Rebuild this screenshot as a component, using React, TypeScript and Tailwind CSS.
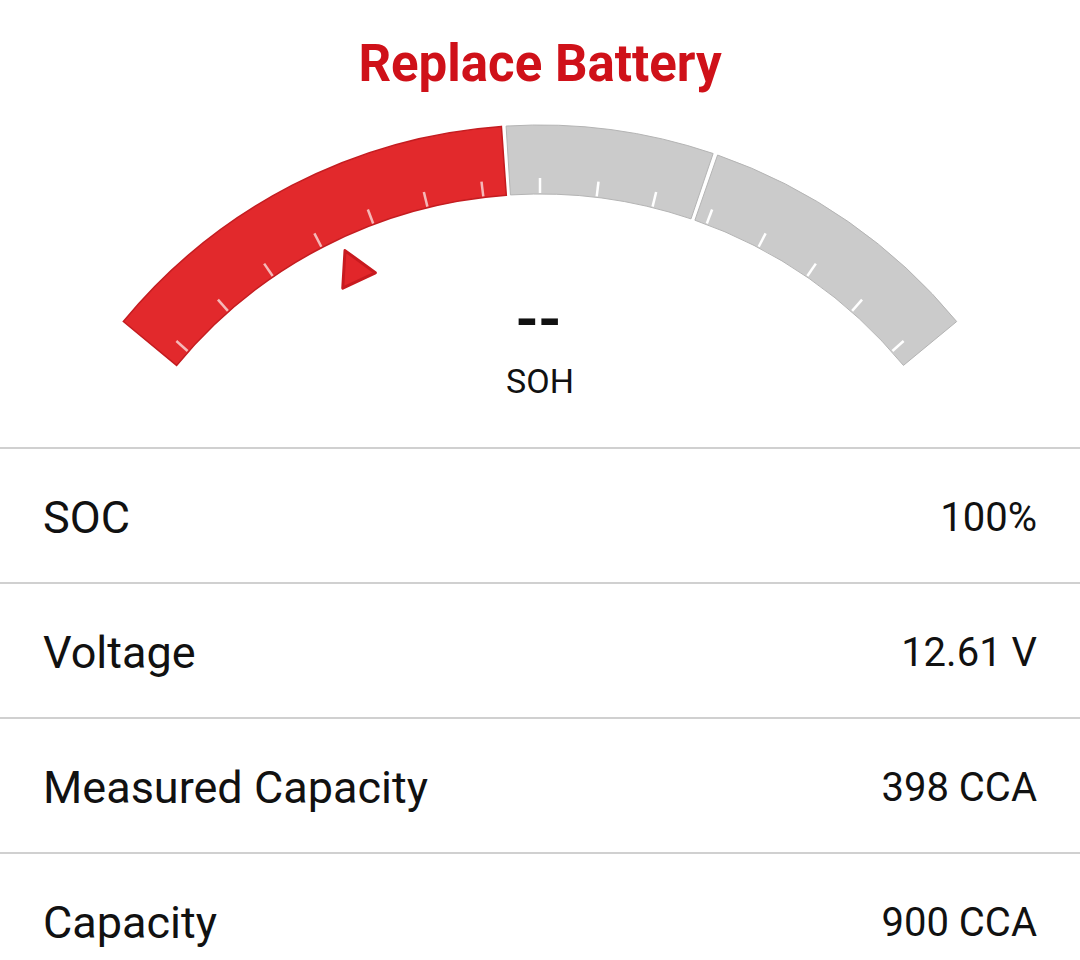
import React from "react";

const CX = 540;
const CY = 665;
const RO = 540;
const RI = 471;

function pt(r: number, deg: number): [number, number] {
  const a = (deg * Math.PI) / 180;
  return [CX + r * Math.cos(a), CY - r * Math.sin(a)];
}

function f(p: [number, number]) {
  return `${p[0].toFixed(2)} ${p[1].toFixed(2)}`;
}

function seg(a0: number, a1: number) {
  const p0 = pt(RO, a0);
  const p1 = pt(RO, a1);
  const p2 = pt(RI, a1);
  const p3 = pt(RI, a0);
  return `M ${f(p0)} A ${RO} ${RO} 0 0 1 ${f(p1)} L ${f(p2)} A ${RI} ${RI} 0 0 0 ${f(p3)} Z`;
}

const ticks: number[] = [];
for (let k = -7; k <= 7; k++) ticks.push(90 + 6.9 * k);

function Pointer() {
  const ang = 115.2;
  const tip = pt(458, ang);
  const base = pt(425, ang);
  const a = (ang * Math.PI) / 180;
  const px = Math.sin(a);
  const py = Math.cos(a);
  const hw = 18;
  const b1: [number, number] = [base[0] + px * hw, base[1] + py * hw];
  const b2: [number, number] = [base[0] - px * hw, base[1] - py * hw];
  return (
    <path
      d={`M ${f(tip)} L ${f(b1)} L ${f(b2)} Z`}
      fill="#e2262a"
      stroke="#c81a1f"
      strokeWidth={3}
      strokeLinejoin="round"
    />
  );
}

function Gauge() {
  return (
    <svg width={1080} height={358} viewBox="0 89 1080 358" className="block">
      <path d={seg(140.5, 94.1)} fill="#e2292c" stroke="#c41c20" strokeWidth={1.5} />
      <path d={seg(93.6, 71.3)} fill="#cbcbcb" stroke="#b4b4b4" strokeWidth={1} />
      <path d={seg(70.8, 39.5)} fill="#cbcbcb" stroke="#b4b4b4" strokeWidth={1} />
      {ticks.map((t, i) => {
        const p1 = pt(RI + 1, t);
        const p2 = pt(RI + 16, t);
        const red = t > 94;
        return (
          <line
            key={i}
            x1={p1[0]}
            y1={p1[1]}
            x2={p2[0]}
            y2={p2[1]}
            stroke={red ? "#f5b8b8" : "#ffffff"}
            strokeWidth={2.5}
          />
        );
      })}
      <Pointer />
    </svg>
  );
}

const rows = [
  { label: "SOC", value: "100%" },
  { label: "Voltage", value: "12.61 V" },
  { label: "Measured Capacity", value: "398 CCA" },
  { label: "Capacity", value: "900 CCA" },
];

export default function App() {
  return (
    <div className="w-[1080px] h-[960px] overflow-hidden bg-white font-['Roboto','Noto_Sans',sans-serif] text-[#111111]">
      <div className="relative h-[447px]">
        <h1 className="pt-[38px] text-center text-[51px] leading-[51px] font-bold text-[#cf1119]">
          Replace Battery
        </h1>
        <Gauge />
        <div className="absolute left-0 right-0 top-[290px] flex flex-col items-center">
          <div className="text-[60px] leading-[60px] font-bold tracking-[-1px] pr-[4px]">--</div>
          <div className="mt-[14px] text-[34px] leading-[34px]">SOH</div>
        </div>
      </div>
      {rows.map((r) => (
        <div
          key={r.label}
          className="h-[135px] border-t-2 border-[#d0d0d0] flex items-center justify-between px-[43px] pt-[4px]"
        >
          <span className="text-[45px]">{r.label}</span>
          <span className="text-[40px]">{r.value}</span>
        </div>
      ))}
    </div>
  );
}
